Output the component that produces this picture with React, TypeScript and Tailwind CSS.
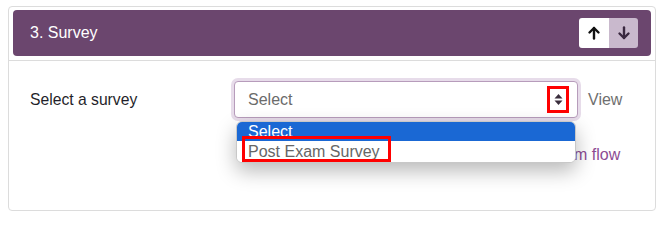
import React from "react";

function ArrowUp({ color }: { color: string }) {
  return (
    <svg width="14" height="14" viewBox="0 0 14 14" fill="none" stroke={color} strokeWidth="2.4" strokeLinecap="round" strokeLinejoin="round">
      <path d="M7 12.5V2" />
      <path d="M2.5 6.5L7 2l4.5 4.5" />
    </svg>
  );
}

function ArrowDown({ color }: { color: string }) {
  return (
    <svg width="14" height="14" viewBox="0 0 14 14" fill="none" stroke={color} strokeWidth="2.4" strokeLinecap="round" strokeLinejoin="round">
      <path d="M7 1.5V12" />
      <path d="M2.5 7.5L7 12l4.5-4.5" />
    </svg>
  );
}

export default function App() {
  return (
    <div className="w-[665px] h-[215px] bg-white pt-[6px] pl-[8px] pr-[9px]" style={{ fontFamily: '"Liberation Sans", Arial, sans-serif' }}>
      <div className="h-[205px] border border-[#dcdcdc] rounded-[4px] bg-white">
        <div className="px-[4px] pt-[3px] pb-[4px] border-b border-[#dcdcdc]">
          <div className="h-[46px] rounded-[4px] bg-[#6b466e] flex items-center justify-between pl-[17px] pr-[13px]">
            <span className="text-white text-[16px]">3. Survey</span>
            <div className="flex rounded-[3px] overflow-hidden">
              <div className="w-[30px] h-[30px] bg-white flex items-center justify-center">
                <ArrowUp color="#111" />
              </div>
              <div className="w-[29px] h-[30px] bg-[#c9b9cd] flex items-center justify-center">
                <ArrowDown color="#3a2840" />
              </div>
            </div>
          </div>
        </div>
        <div className="pl-[21px] pt-[20px]">
          <div className="flex items-center">
            <span className="w-[204px] text-[15.7px] text-[#1f1f2a]">Select a survey</span>
            <div className="relative">
              <div className="w-[344px] h-[37px] rounded-[4px] border border-[#b79cbb] shadow-[0_0_0_3px_#e7dcea] bg-white flex items-center justify-between pl-[13px] pr-[8px]">
                <span className="text-[16px] text-[#6b6b6b]">Select</span>
                <div className="w-[22px] h-[27px] border-[3px] border-[#ff0000] flex items-center justify-center">
                  <svg width="9" height="13" viewBox="0 0 9 13">
                    <path d="M0.5 5.5L4.5 1l4 4.5z" fill="#3a2d3c" />
                    <path d="M0.5 7.5L4.5 12l4-4.5z" fill="#3a2d3c" />
                  </svg>
                </div>
              </div>
              <div className="absolute left-[2px] top-[40px] w-[340px] rounded-[6px] overflow-hidden bg-white shadow-[0_8px_20px_rgba(0,0,0,0.28)] border border-[#c8c8c8] z-10">
                <div className="h-[19px] bg-[#1a68d4] text-white text-[16px] leading-[19px] pl-[11px]">Select</div>
                <div className="h-[21px] bg-white text-[16px] leading-[21px] text-[#666] pl-[11px] relative">
                  Post Exam Survey
                  <div className="absolute left-[5px] top-[-5px] w-[149px] h-[26px] border-[3px] border-[#ff0000]" />
                </div>
              </div>
            </div>
            <span className="ml-[10px] text-[16px] text-[#6f6f6f]">View</span>
          </div>
          <div className="mt-[25px] pl-[464px] text-[16px] text-[#8d4c94]">Preview form flow</div>
        </div>
      </div>
    </div>
  );
}
